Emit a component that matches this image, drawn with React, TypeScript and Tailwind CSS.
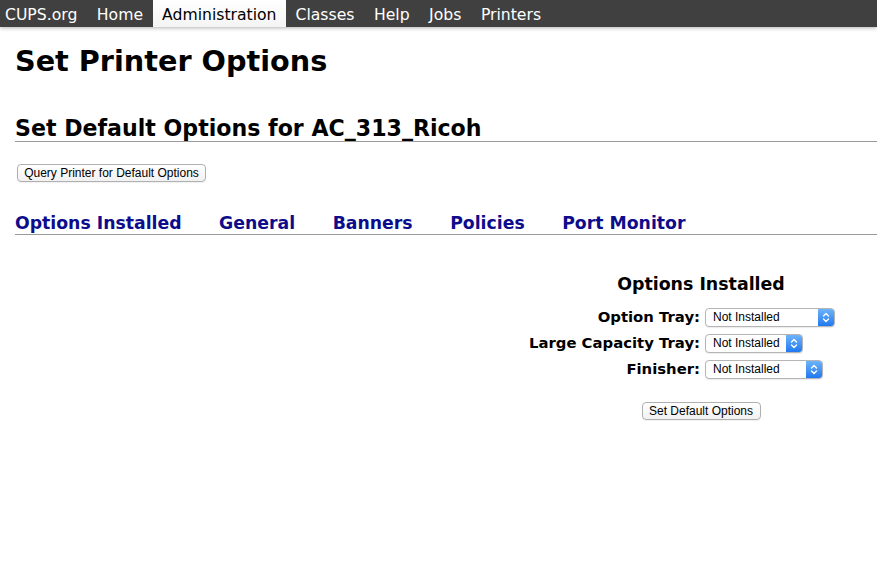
import React from "react";

const navItems = ["CUPS.org", "Home", "Administration", "Classes", "Help", "Jobs", "Printers"];
const tabs = ["Options Installed", "General", "Banners", "Policies", "Port Monitor"];
const rows: { label: string; w: string }[] = [
  { label: "Option Tray:", w: "w-[130px]" },
  { label: "Large Capacity Tray:", w: "w-[98px]" },
  { label: "Finisher:", w: "w-[118px]" },
];

function Chevrons() {
  return (
    <svg width="8" height="11" viewBox="0 0 8 11" fill="none" stroke="white" strokeWidth="1.4" strokeLinecap="round" strokeLinejoin="round">
      <path d="M1.5 4 L4 1.5 L6.5 4" />
      <path d="M1.5 7 L4 9.5 L6.5 7" />
    </svg>
  );
}

function Select({ w }: { w: string }) {
  return (
    <div className={`${w} h-[19px] flex items-stretch rounded-[4px] border border-[#b5b5b5] bg-white shadow-[0_1px_1px_rgba(0,0,0,0.08)] overflow-hidden`}>
      <div className="flex-1 flex items-center pl-[7px] text-[12px] text-black" style={{ fontFamily: '"Liberation Sans", Arial, sans-serif' }}>
        Not Installed
      </div>
      <div className="w-[16px] flex items-center justify-center bg-gradient-to-b from-[#6db3fb] to-[#1f78ef]">
        <Chevrons />
      </div>
    </div>
  );
}

function Button({ children, w }: { children: React.ReactNode; w: string }) {
  return (
    <div
      className={`${w} h-[18px] flex items-center justify-center rounded-[4px] border border-[#b0b0b0] bg-gradient-to-b from-white to-[#f1f1f1] text-[12px] text-black shadow-[0_1px_1px_rgba(0,0,0,0.06)]`}
      style={{ fontFamily: '"Liberation Sans", Arial, sans-serif' }}
    >
      {children}
    </div>
  );
}

export default function App() {
  return (
    <div className="w-[877px] h-[576px] bg-white text-black overflow-hidden" style={{ fontFamily: '"DejaVu Sans", Verdana, sans-serif' }}>
      <div className="relative h-[27px] bg-[#404040] flex shadow-[0_1px_4px_rgba(0,0,0,0.3)]">
        <div className="flex pl-[5px] gap-[19.5px]">
          {navItems.map((n) =>
            n === "Administration" ? (
              <div key={n} className="h-[27px] -mx-[10px] px-[9.5px] pt-[2px] flex items-center bg-gradient-to-b from-white to-[#f4f4f4] text-black text-[15.65px] leading-[25px]">
                {n}
              </div>
            ) : (
              <div key={n} className="h-[27px] pt-[2px] flex items-center text-white text-[15.65px] leading-[25px]">
                {n}
              </div>
            )
          )}
        </div>
      </div>

      <h1 className="ml-[15px] mt-[17px] text-[28.7px] leading-[34px] font-bold">Set Printer Options</h1>

      <h2 className="ml-[15px] mt-[37px] text-[22.1px] leading-[26px] font-bold border-b border-[#9a9a9a]">
        Set Default Options for AC_313_Ricoh
      </h2>

      <div className="ml-[17px] mt-[22px]">
        <Button w="w-[189px]">Query Printer for Default Options</Button>
      </div>

      <div className="ml-[15px] mt-[30px] border-b border-[#9a9a9a] flex gap-[37.5px]">
        {tabs.map((t) => (
          <div key={t} className="text-[17.3px] leading-[22px] font-bold text-[#0c0c8c]">
            {t}
          </div>
        ))}
      </div>

      <div className="ml-auto w-[352px] mt-[38px]">
        <div className="text-center text-[17.4px] leading-[22px] font-bold">Options Installed</div>
        <div className="mt-[9px] grid grid-cols-[175px_auto] gap-x-[5px]">
          {rows.map((r) => (
            <React.Fragment key={r.label}>
              <div className="h-[26px] text-right text-[14.85px] leading-[26px] font-bold">{r.label}</div>
              <div className="h-[26px] flex items-center">
                <Select w={r.w} />
              </div>
            </React.Fragment>
          ))}
        </div>
        <div className="mt-[20px] flex justify-center">
          <Button w="w-[119px]">Set Default Options</Button>
        </div>
      </div>
    </div>
  );
}
